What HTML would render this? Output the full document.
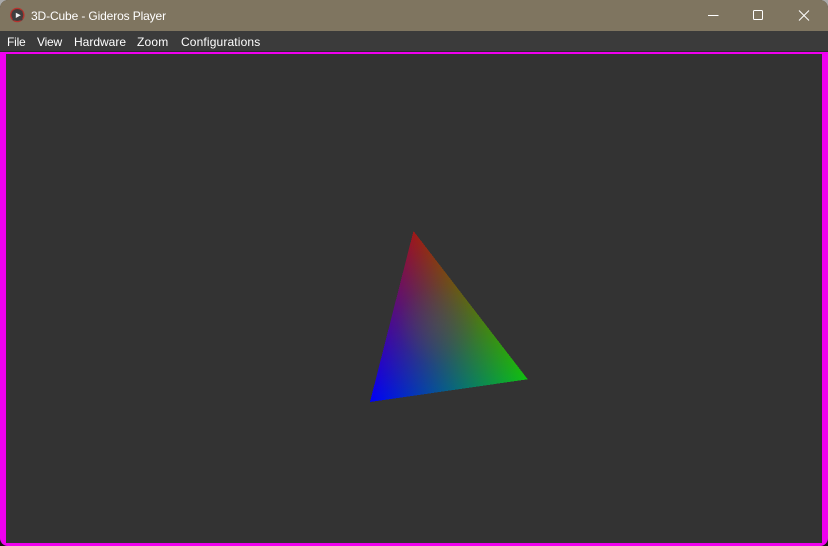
<!DOCTYPE html>
<html lang="en">
<head>
<meta charset="utf-8">
<title>3D-Cube - Gideros Player</title>
<style>
html,body{margin:0;padding:0;width:828px;height:546px;overflow:hidden;background:linear-gradient(#a9a9a9 0,#a9a9a9 50%,#15150c 50%,#15150c 100%);}
#win{position:absolute;left:0;top:0;width:828px;height:546px;overflow:hidden;border-radius:8px;background:#333;font-family:"Liberation Sans",sans-serif;}
#title{position:absolute;left:0;top:0;width:828px;height:31px;background:#7f7560;}
#title span{position:absolute;left:31px;top:9px;font-size:12px;line-height:14px;color:#fff;white-space:nowrap;letter-spacing:-.13px;}
#menu{position:absolute;left:0;top:31px;width:828px;height:21px;background:#3b3b3b;}
#menu span{position:absolute;top:4px;font-size:12px;line-height:14px;color:#fff;white-space:nowrap;}
.m{position:absolute;background:#f000f0;}
#ic,#btn,#tri{position:absolute;left:0;top:0;}
</style>
</head>
<body>
<div id="win">
<div id="title"><span>3D-Cube - Gideros Player</span></div>
<div id="menu">
<span style="left:7px;letter-spacing:-.2px">File</span>
<span style="left:37px;letter-spacing:-.2px">View</span>
<span style="left:74px">Hardware</span>
<span style="left:137px;letter-spacing:.2px">Zoom</span>
<span style="left:181px;letter-spacing:.14px">Configurations</span>
</div>
<div style="position:absolute;left:0;top:51px;width:828px;height:1px;background:#2b2b2b"></div>
<div class="m" style="left:0;top:52px;width:828px;height:2px"></div>
<div class="m" style="left:0;top:52px;width:6px;height:494px"></div>
<div class="m" style="left:822px;top:52px;width:6px;height:494px"></div>
<div class="m" style="left:0;top:543px;width:828px;height:3px"></div>

<svg id="ic" width="40" height="31" viewBox="0 0 40 31">
<circle cx="17.3" cy="15" r="6.6" fill="#4a3a36" stroke="#b8332e" stroke-width="1.3"/>
<rect x="12.5" y="10.5" width="10" height="10" rx="1" fill="#3f3f3f"/>
<path d="M15.8 12.8 L20.8 15.3 L15.8 18 Z" fill="#f2f2f2"/>
</svg>

<svg id="btn" width="828" height="31" viewBox="0 0 828 31" fill="none" stroke="#fff" stroke-width="1">
<path d="M708 15.5H718.5"/>
<rect x="753.5" y="10.5" width="9" height="9" rx="1"/>
<path d="M799 10.5L809 20.5M809 10.5L799 20.5"/>
</svg>

<svg id="tri" width="828" height="546" viewBox="0 0 828 546">
<defs>
<linearGradient id="r" gradientUnits="userSpaceOnUse" x1="413.5" y1="231" x2="436.66" y2="392.4">
<stop offset="0" stop-color="#a01818"/><stop offset="1" stop-color="#000"/>
</linearGradient>
<linearGradient id="g" gradientUnits="userSpaceOnUse" x1="527.7" y1="379.3" x2="385.07" y2="342.91">
<stop offset="0" stop-color="#10c010"/><stop offset="1" stop-color="#000"/>
</linearGradient>
<linearGradient id="b" gradientUnits="userSpaceOnUse" x1="370" y1="402" x2="479.73" y2="317.21">
<stop offset="0" stop-color="#0000f8"/><stop offset="1" stop-color="#000"/>
</linearGradient>
<radialGradient id="c" gradientUnits="userSpaceOnUse" cx="438" cy="325" r="40">
<stop offset="0" stop-color="#505058" stop-opacity=".3"/><stop offset="1" stop-color="#505058" stop-opacity="0"/>
</radialGradient>
</defs>
<g style="isolation:isolate" shape-rendering="crispEdges">
<polygon points="413.5,231 527.7,379.3 370,402" fill="#000"/>
<polygon points="413.5,231 527.7,379.3 370,402" fill="url(#r)" style="mix-blend-mode:plus-lighter"/>
<polygon points="413.5,231 527.7,379.3 370,402" fill="url(#g)" style="mix-blend-mode:plus-lighter"/>
<polygon points="413.5,231 527.7,379.3 370,402" fill="url(#b)" style="mix-blend-mode:plus-lighter"/>
<polygon points="413.5,231 527.7,379.3 370,402" fill="url(#c)"/>
</g>
</svg>
</div>
</body>
</html>
